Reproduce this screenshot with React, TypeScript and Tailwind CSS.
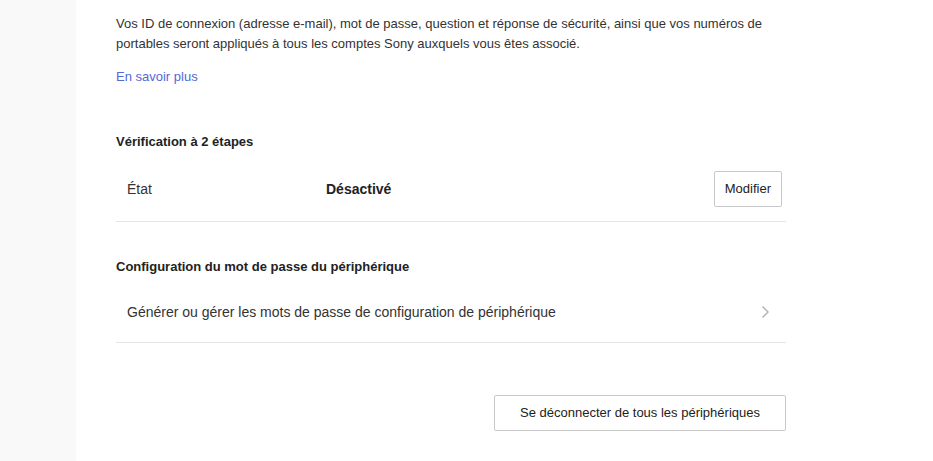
const Divider = () => <div className="h-px bg-[#e5e5e5]" />;

const Chevron = () => (
  <svg width="9" height="14" viewBox="0 0 9 14" fill="none">
    <path d="M1.5 1.5L7 7L1.5 12.5" stroke="#b5b5b5" strokeWidth="1.5" />
  </svg>
);

export default function App() {
  return (
    <div
      className="flex h-[461px] w-[933px] overflow-hidden bg-white text-[#333]"
      style={{ fontFamily: '"Liberation Sans", Arial, sans-serif' }}
    >
      <aside className="w-[76px] shrink-0 bg-[#f9f9f9]" />

      <main className="ml-[40px] w-[670px]">
        <p className="mt-[14px] text-[13px] leading-[20px]">
          Vos ID de connexion (adresse e-mail), mot de passe, question et réponse de sécurité, ainsi que vos numéros de
          portables seront appliqués à tous les comptes Sony auxquels vous êtes associé.
        </p>

        <a href="#" className="mt-[13px] block text-[13px] leading-[20px] text-[#5468d6]">
          En savoir plus
        </a>

        <section className="mt-[45px]">
          <h2 className="text-[13px] font-bold leading-[20px] text-[#222]">Vérification à 2 étapes</h2>

          <div className="mt-[5px] flex h-[64px] items-center pl-[11px] pr-[4px] text-[14px]">
            <span className="w-[199px]">État</span>
            <span className="font-bold text-[#222]">Désactivé</span>
            <button className="ml-auto h-[36px] rounded-[2px] border border-[#c8c8c8] px-[10px] text-[13px] text-[#222]">
              Modifier
            </button>
          </div>
          <Divider />
        </section>

        <section className="mt-[35px]">
          <h2 className="text-[13px] font-bold leading-[20px] text-[#222]">
            Configuration du mot de passe du périphérique
          </h2>

          <div className="mt-[5px] flex h-[60px] items-center pl-[11px] pr-[16px] text-[14px]">
            <span>Générer ou gérer les mots de passe de configuration de périphérique</span>
            <span className="ml-auto">
              <Chevron />
            </span>
          </div>
          <Divider />
        </section>

        <div className="mt-[52px] flex justify-end">
          <button className="h-[36px] w-[292px] rounded-[2px] border border-[#c8c8c8] text-[13px] text-[#222]">
            Se déconnecter de tous les périphériques
          </button>
        </div>
      </main>
    </div>
  );
}
